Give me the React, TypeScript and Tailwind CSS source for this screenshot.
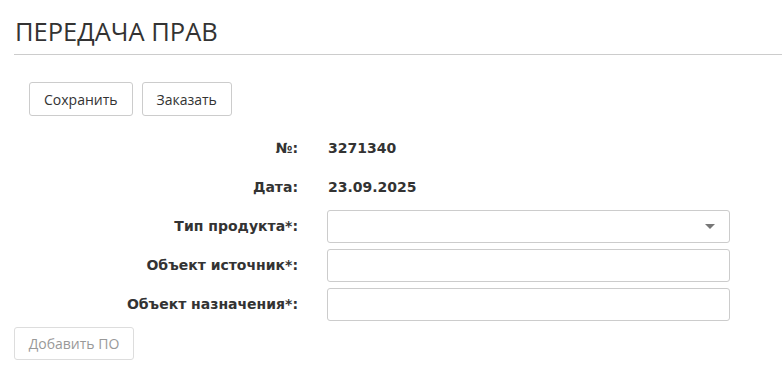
import React from "react";

const labelFont = "font-['DejaVu_Sans',Verdana,sans-serif]";
const uiFont = "font-['Open_Sans','Noto_Sans',sans-serif]";

const Row: React.FC<{ label: string; children: React.ReactNode }> = ({ label, children }) => (
  <>
    <div className={`${labelFont} flex h-[33px] items-center justify-end text-[14px] font-bold text-[#333]`}>
      {label}
    </div>
    <div className="flex h-[33px] items-center">{children}</div>
  </>
);

const App: React.FC = () => {
  return (
    <div className="min-h-[372px] w-[782px] bg-white pl-[14px]">
      <h1 className={`${uiFont} border-b border-[#cccccc] pb-[6px] pt-[14px] pl-[1px] text-[25.5px] leading-[34px] font-normal text-[#333]`}>
        ПЕРЕДАЧА ПРАВ
      </h1>

      <div className="ml-[15px] mt-[27px] flex gap-[9px]">
        <button className={`${uiFont} h-[34px] rounded-[3px] border border-[#ccc] bg-white px-[14px] text-[14px] text-[#333]`}>
          Сохранить
        </button>
        <button className={`${uiFont} h-[34px] rounded-[3px] border border-[#ccc] bg-white px-[14px] text-[14px] text-[#333]`}>
          Заказать
        </button>
      </div>

      <div className="mt-[16px] grid grid-cols-[284px_403px] gap-x-[29px] gap-y-[6px]">
        <Row label="№:">
          <span className={`${labelFont} pl-[1px] text-[14px] font-bold text-[#333]`}>3271340</span>
        </Row>
        <Row label="Дата:">
          <span className={`${labelFont} pl-[1px] text-[14px] font-bold text-[#333]`}>23.09.2025</span>
        </Row>
        <Row label="Тип продукта*:">
          <div className="flex h-[33px] w-full items-center justify-end rounded-[3px] border border-[#ccc] bg-white pr-[14px]">
            <svg width="10" height="6" viewBox="0 0 10 6">
              <path d="M0 0h10L5 5z" fill="#777" />
            </svg>
          </div>
        </Row>
        <Row label="Объект источник*:">
          <input className="h-[33px] w-full rounded-[3px] border border-[#ccc] bg-white outline-none" />
        </Row>
        <Row label="Объект назначения*:">
          <input className="h-[33px] w-full rounded-[3px] border border-[#ccc] bg-white outline-none" />
        </Row>
      </div>

      <button
        disabled
        className={`${uiFont} mt-[6px] h-[33px] w-[120px] rounded-[3px] border border-[#ddd] bg-white text-[14px] text-[#999]`}
      >
        Добавить ПО
      </button>
    </div>
  );
};

export default App;
